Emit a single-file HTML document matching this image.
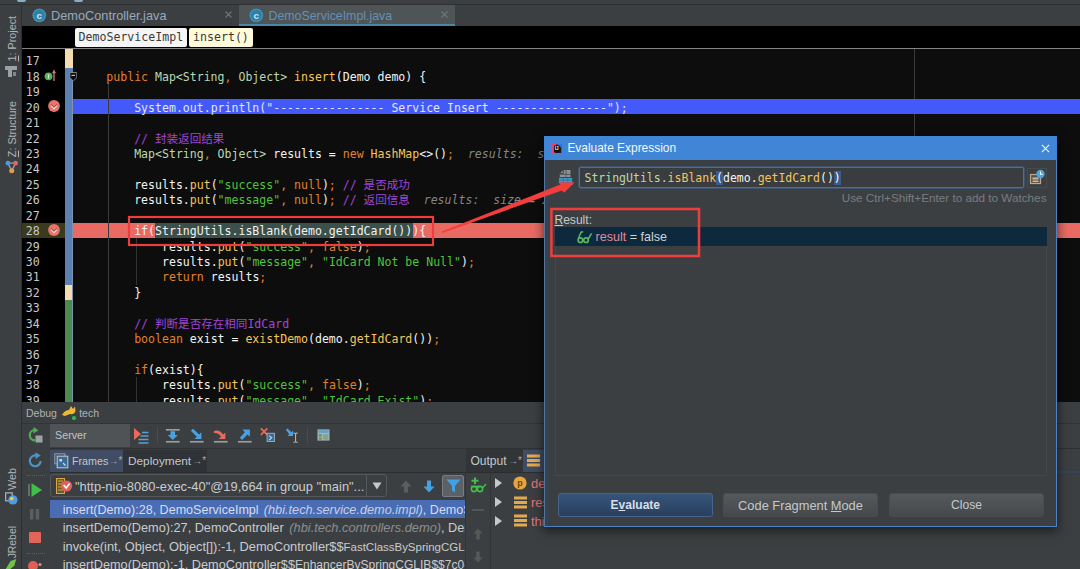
<!DOCTYPE html>
<html lang="zh">
<head>
<meta charset="utf-8">
<title>Evaluate Expression - Debug</title>
<style>
html,body{margin:0;padding:0;}
body{width:1080px;height:569px;overflow:hidden;background:#3c3f41;position:relative;
 font-family:"Liberation Sans","Noto Sans CJK SC",sans-serif;font-size:12.5px;color:#bbbbbb;}
.abs,body>div,body>svg{position:absolute;}
.abs{position:absolute}
/* ---------- top ---------- */
#topline{left:0;top:4px;width:1080px;height:1px;background:#2e3032;}
#leftstrip{left:0;top:5px;width:21px;height:564px;background:#3c3f41;border-right:1px solid #2d2f31;}
.vt{position:absolute;left:5px;width:15px;line-height:15px;writing-mode:vertical-rl;transform:rotate(180deg);white-space:nowrap;color:#b0b4b7;font-size:10.75px;}
/* tabs */
#tabs{left:22px;top:5px;width:1058px;height:21px;background:#3c3f41;}
.tab{position:absolute;top:0;height:21px;}
.tab .tx{position:absolute;top:3.2px;font-size:12.75px;line-height:16px;white-space:nowrap;}
.tab .x{position:absolute;top:5px;width:9px;height:9px;}
#tab2{left:217px;width:216px;background:#4f5456;border-bottom:2px solid #4a88a6;height:19px;}
/* breadcrumb */
#crumb{left:22px;top:26px;width:1058px;height:22px;background:#000;}
.cb{position:absolute;top:2px;height:19px;line-height:19.5px;border-radius:2px;font-family:"DejaVu Sans Mono","Liberation Mono",monospace;font-size:11.6px;color:#3a3a3a;padding:0 4px;white-space:pre;}
#sep{left:22px;top:48px;width:1058px;height:1px;background:#858585;}
/* editor */
#gutter{left:22px;top:49px;width:43px;height:353px;background:#000;}
#bar{left:65px;top:49px;width:8px;height:353px;background:#5b80b4;}
#editor{left:73px;top:49px;width:1007px;height:353px;background:#0d0d0d;}
.num{position:absolute;left:25.7px;width:24px;height:15.43px;line-height:15.43px;font-family:"DejaVu Sans Mono","Liberation Mono",monospace;font-size:11.6px;color:#c8c8c8;white-space:pre;}
.cl{position:absolute;height:15.43px;line-height:15.43px;font-family:"DejaVu Sans Mono","Liberation Mono","Noto Sans CJK SC",monospace;font-size:11.56px;color:#f2f2f2;white-space:pre;}
.k{color:#e0812c}.o{color:#e0812c}.t{color:#b9d8b2}.m{color:#f3c65c}.s{color:#4fc43c}.c{color:#a046d6}.d{color:#f2f2f2}
.h{color:#858585;font-style:italic}.d20{color:#e1e5ff}
.sel{color:#f2f2f2;}
.hl{position:absolute;left:73px;width:1007px;height:15.5px;}
.guide{position:absolute;width:1px;background:#3a3a3a;}
/* debug */
#dbghead{left:22px;top:402px;width:1058px;height:21px;background:#3c3f41;}
.ui{position:absolute;white-space:nowrap;line-height:16px;}
/* dialog */
#dlg{left:544px;top:136px;width:511px;height:389px;background:#3c3f41;border:1px solid #4f82c4;border-left-color:#5a7596;box-shadow:0 3px 10px 1px rgba(0,0,0,0.55);}
#dlgtitle{position:absolute;left:-1px;top:-1px;width:513px;height:24px;background:#4185d7;}
.btn{position:absolute;top:356px;height:22px;border-radius:3px;text-align:center;line-height:23.5px;font-size:12.84px;color:#c4c8cb;border:1px solid #4a4d4f;background:linear-gradient(#55595b,#45494b);}
.fr{position:absolute;left:12.7px;white-space:nowrap;font-size:12.55px;line-height:17px;color:#c9cccf}
.fr i{color:#8a8e91}
.inp{font-family:"DejaVu Sans Mono","Liberation Mono",monospace;font-size:11.5px;line-height:15px;white-space:pre}
</style>
</head>
<body>
<!-- top strip -->
<div id="topline"></div>
<div class="abs" style="left:17px;top:0;width:9px;height:1.5px;background:#86aec6;border-radius:0 0 4px 4px"></div>
<div class="abs" style="left:74px;top:0;width:9px;height:1.5px;background:#86aec6;border-radius:0 0 4px 4px"></div>

<!-- left tool strip -->
<div id="leftstrip">
</div>
<div class="vt" style="top:15.8px"><u>1</u>: Project</div>
<div class="vt" style="top:100.6px"><u>Z</u>: Structure</div>
<div class="vt" style="top:467.8px">Web</div>
<div class="vt" style="top:526.4px;font-size:10.4px">JRebel</div>
<!-- strip icons -->
<svg style="left:4px;top:65px" width="14" height="14" viewBox="0 0 14 14"><rect x="1" y="1" width="12" height="4" fill="#9aa0a5"/><rect x="4" y="5" width="4" height="7" fill="#9aa0a5"/><rect x="9" y="7" width="3" height="4" fill="#7f868b"/></svg>
<svg style="left:4.5px;top:159.5px" width="13.5" height="14" viewBox="0 0 14 14"><path d="M3 3 L7 11 L11 3z" stroke="#9aa0a5" stroke-width="1.4" fill="none"/><circle cx="3" cy="3" r="2.4" fill="#4f9ad6"/><circle cx="11" cy="3" r="2.4" fill="#e0686a"/><circle cx="7" cy="11" r="2.6" fill="#e39a4c"/></svg>
<svg style="left:3.5px;top:489.5px" width="15" height="16" viewBox="0 0 16 17"><rect x="1.8" y="3" width="7" height="8.5" fill="none" stroke="#aeb3b7" stroke-width="1.3"/><circle cx="9.5" cy="10.5" r="5" fill="#4d9be0"/><path d="M6 9 q2 -3 4 -1 q1 2 -1 3 q-2 1 -3 -2z" fill="#f0c850"/></svg>
<svg style="left:3px;top:558.5px" width="17" height="11.5" viewBox="0 0 18 12"><path d="M2 12 L8 2 L14 0 L12 7 L6 12z" fill="#6fc34a"/></svg>

<!-- tabs -->
<div id="tabs">
  <div class="tab" id="tab1" style="left:0;width:217px">
    <svg class="abs" style="left:10.4px;top:3.4px" width="14.6" height="14.6" viewBox="0 0 14 14"><circle cx="7" cy="7" r="6.6" fill="#3d8fb5"/><circle cx="7" cy="7" r="5" fill="#2f7ea5"/><text x="7" y="10.4" font-family="Liberation Sans, sans-serif" font-size="9.5" font-weight="bold" fill="#c9e6f2" text-anchor="middle">c</text></svg>
    <span class="tx" style="left:29px;color:#98a9ba">DemoController.java</span>
    <svg class="x" style="left:202px" viewBox="0 0 9 9"><path d="M1.5 1.5 L7.5 7.5 M7.5 1.5 L1.5 7.5" stroke="#6d7275" stroke-width="1.2"/></svg>
  </div>
  <div class="tab" id="tab2">
    <svg class="abs" style="left:10.4px;top:3.4px" width="14.6" height="14.6" viewBox="0 0 14 14"><circle cx="7" cy="7" r="6.6" fill="#3d8fb5"/><circle cx="7" cy="7" r="5" fill="#2f7ea5"/><text x="7" y="10.4" font-family="Liberation Sans, sans-serif" font-size="9.5" font-weight="bold" fill="#c9e6f2" text-anchor="middle">c</text></svg>
    <span class="tx" style="left:29.5px;color:#6591b5;font-size:12.36px">DemoServiceImpl.java</span>
    <svg class="x" style="left:201px" viewBox="0 0 9 9"><path d="M1.5 1.5 L7.5 7.5 M7.5 1.5 L1.5 7.5" stroke="#6f7477" stroke-width="1.2"/></svg>
  </div>
</div>

<!-- breadcrumb -->
<div id="crumb">
  <div class="cb" style="left:52.5px;background:#f5f5f5;">DemoServiceImpl</div>
  <div class="cb" style="left:167px;background:#fffbd8;">insert()</div>
</div>
<div id="sep"></div>

<!-- editor -->
<div id="gutter"></div>
<div id="bar"></div>
<div class="abs" style="left:65px;top:49px;width:8px;height:19px;background:#f3dcb0"></div>
<div class="abs" style="left:65px;top:284.5px;width:8px;height:15.5px;background:#f3dcb0"></div>
<div class="abs" style="left:65px;top:300px;width:8px;height:102px;background:#4b8a4f"></div>
<div id="editor"></div>
<div class="abs" style="left:914px;top:49px;width:1px;height:353px;background:#3a3a3a"></div>
<!-- line highlights -->
<div class="hl" style="top:98.75px;background:#4359fa"></div>
<div class="abs" style="left:22px;top:222.5px;width:43px;height:15.5px;background:#3a3a1c"></div>
<div class="hl" style="top:222.5px;background:#e96a63"></div>
<div class="abs" style="left:155px;top:222.5px;width:257.6px;height:15.5px;background:#3b504a"></div>
<!-- indent guides -->
<div class="guide" style="left:107.6px;top:83px;height:319px"></div>
<div class="guide" style="left:135.6px;top:238px;height:47px;background:#333"></div>
<div class="guide" style="left:135.6px;top:377px;height:25px;background:#333"></div>
<div class="num" style="top:54.36px">17</div>
<div class="num" style="top:69.79px">18</div>
<div class="cl" style="top:69.79px;left:106.34px"><span class="k">public </span><span class="t">Map&lt;String</span><span class="o">, </span><span class="t">Object&gt; </span><span class="m">insert</span><span class="d">(Demo demo) {</span></div>
<div class="num" style="top:85.22px">19</div>
<div class="num" style="top:100.65px">20</div>
<div class="cl" style="top:100.65px;left:134.18px"><span class="d20">System.out.println("---------------- Service Insert ----------------");</span></div>
<div class="num" style="top:116.08px">21</div>
<div class="num" style="top:131.51px">22</div>
<div class="cl" style="top:131.51px;left:134.18px"><span class="c">// 封装返回结果</span></div>
<div class="num" style="top:146.94px">23</div>
<div class="cl" style="top:146.94px;left:134.18px"><span class="t">Map&lt;String</span><span class="o">, </span><span class="t">Object&gt; </span><span class="d">results = </span><span class="k">new </span><span class="m">HashMap</span><span class="d">&lt;&gt;()</span><span class="o">;</span><span class="h">  results:  size = 2</span></div>
<div class="num" style="top:162.37px">24</div>
<div class="num" style="top:177.80px">25</div>
<div class="cl" style="top:177.80px;left:134.18px"><span class="d">results.</span><span class="m">put</span><span class="d">(</span><span class="s">"success"</span><span class="o">, </span><span class="k">null</span><span class="d">)</span><span class="o">; </span><span class="c">// 是否成功</span></div>
<div class="num" style="top:193.23px">26</div>
<div class="cl" style="top:193.23px;left:134.18px"><span class="d">results.</span><span class="m">put</span><span class="d">(</span><span class="s">"message"</span><span class="o">, </span><span class="k">null</span><span class="d">)</span><span class="o">; </span><span class="c">// 返回信息</span><span class="h">  results:  size = 2</span></div>
<div class="num" style="top:208.66px">27</div>
<div class="num" style="top:224.09px">28</div>
<div class="cl" style="top:224.09px;left:134.18px"><span class="d">if(</span><span class="sel">StringUtils.isBlank(demo.getIdCard())</span><span class="d">){</span></div>
<div class="num" style="top:239.52px">29</div>
<div class="cl" style="top:239.52px;left:162.02px"><span class="d">results.</span><span class="m">put</span><span class="d">(</span><span class="s">"success"</span><span class="o">, </span><span class="k">false</span><span class="d">)</span><span class="o">;</span></div>
<div class="num" style="top:254.95px">30</div>
<div class="cl" style="top:254.95px;left:162.02px"><span class="d">results.</span><span class="m">put</span><span class="d">(</span><span class="s">"message"</span><span class="o">, </span><span class="s">"IdCard Not be Null"</span><span class="d">)</span><span class="o">;</span></div>
<div class="num" style="top:270.38px">31</div>
<div class="cl" style="top:270.38px;left:162.02px"><span class="k">return </span><span class="d">results</span><span class="o">;</span></div>
<div class="num" style="top:285.81px">32</div>
<div class="cl" style="top:285.81px;left:134.18px"><span class="d">}</span></div>
<div class="num" style="top:301.24px">33</div>
<div class="num" style="top:316.67px">34</div>
<div class="cl" style="top:316.67px;left:134.18px"><span class="c">// 判断是否存在相同IdCard</span></div>
<div class="num" style="top:332.10px">35</div>
<div class="cl" style="top:332.10px;left:134.18px"><span class="k">boolean </span><span class="d">exist = </span><span class="m">existDemo</span><span class="d">(demo.</span><span class="m">getIdCard</span><span class="d">())</span><span class="o">;</span></div>
<div class="num" style="top:347.53px">36</div>
<div class="num" style="top:362.96px">37</div>
<div class="cl" style="top:362.96px;left:134.18px"><span class="k">if</span><span class="d">(exist){</span></div>
<div class="num" style="top:378.39px">38</div>
<div class="cl" style="top:378.39px;left:162.02px"><span class="d">results.</span><span class="m">put</span><span class="d">(</span><span class="s">"success"</span><span class="o">, </span><span class="k">false</span><span class="d">)</span><span class="o">;</span></div>
<div class="num" style="top:393.82px">39</div>
<div class="cl" style="top:393.82px;left:162.02px"><span class="d">results.</span><span class="m">put</span><span class="d">(</span><span class="s">"message"</span><span class="o">, </span><span class="s">"IdCard Exist"</span><span class="d">)</span><span class="o">;</span></div>

<!-- gutter icons -->
<!-- line 18 override icon -->
<svg style="left:44px;top:68px" width="14" height="14" viewBox="44 68 14 14"><circle cx="48.5" cy="76.3" r="3.9" fill="#55b25c"/><path d="M48.5 74.3 V78.4" stroke="#cfeccf" stroke-width="1.3"/><path d="M54 81 V72" stroke="#d47f7f" stroke-width="1.3"/><path d="M52 73.2 L54 69.6 L56 73.2z" fill="#d47f7f"/></svg>
<!-- fold marker line 18 -->
<div class="abs" style="left:72px;top:80px;width:1px;height:322px;background:#8292aa"></div>
<svg style="left:68.7px;top:71.7px" width="8.6" height="9.4" viewBox="0 0 11 13"><path d="M0.7 0.7 H10.3 V8 L5.5 12.3 L0.7 8z" fill="#0d0d0d" stroke="#9a9a9a" stroke-width="1.1"/><path d="M3 4.6 H8" stroke="#e8e8e8" stroke-width="1.3"/></svg>
<!-- breakpoints -->
<svg style="left:48px;top:100.2px" width="12" height="12" viewBox="0 0 12 12"><circle cx="6" cy="6" r="5.9" fill="#e8746c"/><path d="M3 4.6 L6 7.6 L9 4.6" stroke="#8a3532" stroke-width="1.1" fill="none"/><path d="M3 5.6 L6 8.6 L9 5.6" stroke="#fbe4e2" stroke-width="1.1" fill="none"/></svg>
<svg style="left:48px;top:224px" width="12" height="12" viewBox="0 0 12 12"><circle cx="6" cy="6" r="5.9" fill="#e8746c"/><path d="M3 4.6 L6 7.6 L9 4.6" stroke="#8a3532" stroke-width="1.1" fill="none"/><path d="M3 5.6 L6 8.6 L9 5.6" stroke="#fbe4e2" stroke-width="1.1" fill="none"/></svg>

<!-- red annotation rectangle + arrow -->


<!-- debug header -->
<div id="dbghead">
  <span class="ui" style="left:4px;top:3px;font-size:10.5px;color:#aeb2b5">Debug</span>
  <svg class="abs" style="left:39px;top:2px" width="17" height="16" viewBox="0 0 17 16"><path d="M1 11 Q4 6 8 6 L10 2 L12 5 L14 2.5 L14.5 7 Q13 11 9 10 L4 12z" fill="#e8b93a"/><circle cx="13" cy="14" r="2.1" fill="#2fb84a"/></svg>
  <span class="ui" style="left:57.2px;top:3px;font-size:10.55px;color:#aeb2b5">tech</span>
</div>

<!-- debug left icon column -->
<div class="abs" style="left:22px;top:423px;width:27px;height:146px;background:#3c3f41"></div>
<div class="abs" style="left:22px;top:423px;width:1058px;height:1px;background:#323436"></div>
<!-- rerun icon -->
<svg style="left:27px;top:427px" width="17" height="17" viewBox="0 0 17 17"><path d="M8 3 A5.2 5.2 0 1 0 8 13.4" stroke="#4fae55" stroke-width="2.2" fill="none"/><path d="M6.5 0 L11.5 3.2 L6.5 6.4z" fill="#4fae55"/><rect x="8.5" y="8.5" width="7" height="7" fill="#9da2a6"/></svg>
<!-- refresh icon -->
<svg style="left:27px;top:452px" width="17" height="17" viewBox="0 0 17 17"><path d="M13.6 9 A5.4 5.4 0 1 1 9.5 3.6" stroke="#4a94c8" stroke-width="2.2" fill="none"/><path d="M8.5 0.2 L13.8 3.6 L8.5 7z" fill="#4a94c8"/></svg>
<!-- resume -->
<svg style="left:27px;top:482px" width="17" height="16" viewBox="0 0 17 16"><rect x="1" y="2" width="2" height="12" fill="#55775a"/><path d="M4.5 1 L15 8 L4.5 15z" fill="#3fbf4a"/></svg>
<!-- pause -->
<svg style="left:29px;top:508px" width="11.5" height="12.5" viewBox="0 0 12 13"><rect x="1" y="1" width="3.6" height="11" fill="#5b5f62"/><rect x="7" y="1" width="3.6" height="11" fill="#5b5f62"/></svg>
<!-- stop -->
<div class="abs" style="left:28.5px;top:532.2px;width:12.3px;height:11.3px;background:#e2655a;border-radius:1px"></div>
<!-- view breakpoints -->
<div class="abs" style="left:27px;top:475px;width:18px;height:0;border-top:1px dotted #5a5e60"></div>
<div class="abs" style="left:27px;top:553px;width:18px;height:0;border-top:1px dotted #5a5e60"></div>
<svg style="left:26.5px;top:557px" width="16" height="16" viewBox="0 0 16 16"><circle cx="6" cy="9" r="5" fill="#e15f55"/><circle cx="13" cy="7.5" r="1.6" fill="#e38a84"/></svg>

<!-- toolbar row -->
<div class="abs" style="left:50px;top:424px;width:80px;height:23px;background:#4f5355;"></div>
<span class="ui" style="left:55px;top:427px;font-size:10.76px;color:#c0c4c7">Server</span>
<div class="abs" style="left:157px;top:427px;width:1px;height:17px;background:#4a4d4f"></div>
<div class="abs" style="left:307px;top:427px;width:1px;height:17px;background:#4a4d4f"></div>
<!-- show execution point -->
<svg style="left:133px;top:427px" width="18" height="17" viewBox="0 0 18 17"><path d="M1 1 L8 7 L1 13z" fill="#ea6a5a"/><path d="M9 5.5 H15.5 M7.5 9 H15.5 M5.5 12.5 H15.5 M5.5 16 H15.5" stroke="#58a0d0" stroke-width="1.5"/></svg>
<!-- step over -->
<svg style="left:164.6px;top:427.6px" width="15.6" height="15.6" viewBox="0 0 17 17"><path d="M1 2 H16" stroke="#9a9fa3" stroke-width="1.8"/><path d="M1 15 H16" stroke="#9a9fa3" stroke-width="1.8"/><path d="M6 3.5 H11 V7.5 H14 L8.5 13 L3 7.5 H6z" fill="#45a3e3"/></svg>
<!-- step into -->
<svg style="left:188.6px;top:427.6px" width="15.6" height="15.6" viewBox="0 0 17 17"><path d="M1 15 H16" stroke="#9a9fa3" stroke-width="1.8"/><path d="M2 3 L4.5 0.8 L11 7 L13.5 4.5 V12 H6 L8.5 9.5z" fill="#45a3e3"/></svg>
<!-- force step into -->
<svg style="left:212.6px;top:427.6px" width="15.6" height="15.6" viewBox="0 0 17 17"><path d="M1 15 H16" stroke="#9a9fa3" stroke-width="1.8"/><path d="M1 3.2 Q7 1 11 7.2 L13.5 4.8 V12 H6.2 L8.7 9.5 Q6 5 1 5.5z" fill="#ea6a5a"/></svg>
<!-- step out -->
<svg style="left:236.6px;top:427.6px" width="15.6" height="15.6" viewBox="0 0 17 17"><path d="M1 15 H16" stroke="#9a9fa3" stroke-width="1.8"/><path d="M3 10.5 L5.5 13 L11.5 7 L14 9.5 V1.5 H6 L8.5 4.5z" fill="#45a3e3"/></svg>
<!-- drop frame -->
<svg style="left:259.8px;top:426.6px" width="15.6" height="15.6" viewBox="0 0 18 18"><path d="M1 1.5 L8.5 9 M8.5 1.5 L1 9" stroke="#ea6a5a" stroke-width="2"/><rect x="8.2" y="7.2" width="8.6" height="9.6" fill="#3a6c96" stroke="#9fb6c8" stroke-width="1"/><path d="M10.5 10 L13.5 12.5 L10.5 15" stroke="#bfe0f5" stroke-width="1.2" fill="none"/></svg>
<!-- run to cursor -->
<svg style="left:285px;top:428px" width="15.2" height="15.2" viewBox="0 0 18 18"><path d="M1 2 L3 0.5 L7.5 5 L9.5 3 V9.5 H3 L5 7.5z" fill="#45a3e3"/><path d="M10 6 Q12 6 12.5 7 Q13 6 15 6 M12.5 7 V16 M10 17 Q12 17 12.5 16 Q13 17 15 17" stroke="#aeb3b7" stroke-width="1.3" fill="none"/></svg>
<!-- evaluate expression icon -->
<svg style="left:316.5px;top:429.4px" width="13" height="12" viewBox="0 0 15 14"><rect x="0.5" y="0.5" width="14" height="13" fill="#a8b4ba" /><rect x="1.5" y="1.5" width="12" height="3" fill="#5a9fd0"/><rect x="2" y="6" width="3.5" height="3" fill="#6f8f5a"/><rect x="2" y="10" width="3.5" height="2.5" fill="#6f8f5a"/><rect x="7" y="6" width="6" height="6.5" fill="#7fa58a"/></svg>

<!-- row 2 tabs -->
<div class="abs" style="left:50px;top:448px;width:1030px;height:1px;background:#2f3133"></div>
<div class="abs" style="left:50px;top:449px;width:416px;height:23px;background:#3a3d3f"></div>
<div class="abs" style="left:50px;top:449.5px;width:72.5px;height:23px;background:#3f4c63"></div>
<div class="abs" style="left:123px;top:449.5px;width:83.5px;height:23px;background:#2f3337"></div>
<svg style="left:54px;top:453px" width="15" height="16" viewBox="0 0 15 16"><rect x="0.8" y="0.8" width="10" height="10" fill="none" stroke="#8f989e" stroke-width="1.1"/><rect x="3.2" y="3.2" width="10.6" height="11.6" fill="#3a6c96" stroke="#b8c4cc" stroke-width="1.1"/><rect x="5.5" y="6" width="2.5" height="2.5" fill="#bfe0f5"/><path d="M9 10 L11.5 12.5" stroke="#bfe0f5" stroke-width="1.3"/></svg>
<span class="ui" style="left:72px;top:453px;font-size:10.71px;color:#c3c7ca">Frames</span>
<span class="ui" style="left:108.6px;top:452.5px;font-size:10px;color:#a8acaf">→*</span>
<span class="ui" style="left:128px;top:453px;font-size:11.84px;color:#c3c7ca">Deployment</span>
<span class="ui" style="left:192.2px;top:452.5px;font-size:10px;color:#a8acaf">→*</span>
<div class="abs" style="left:466px;top:449px;width:57px;height:23px;background:#313538"></div>
<span class="ui" style="left:470.4px;top:453px;font-size:12.09px;color:#c3c7ca">Output</span>
<span class="ui" style="left:508px;top:452.5px;font-size:10px;color:#a8acaf">→*</span>
<div class="abs" style="left:523px;top:449.5px;width:22px;height:23px;background:#3f4c63"></div>
<svg style="left:527px;top:454px" width="13" height="13" viewBox="0 0 13 13"><rect x="0" y="0.5" width="13" height="3" fill="#e3aa4c"/><rect x="0" y="5" width="13" height="3" fill="#e3aa4c"/><rect x="0" y="9.5" width="13" height="3" fill="#e3aa4c"/></svg>
<div class="abs" style="left:50px;top:472px;width:1030px;height:1px;background:#2b2d2f"></div>
<div class="abs" style="left:1057px;top:471px;width:23px;height:2px;background:#33465e"></div>

<!-- thread dropdown -->
<div class="abs" style="left:50px;top:474px;width:337px;height:23px;background:#3c3f41;border:1px solid #55595b;border-radius:3px;box-sizing:border-box"></div>
<div class="abs" style="left:366px;top:475px;width:1px;height:21px;background:#55595b"></div>
<svg style="left:56px;top:478px" width="17" height="16" viewBox="0 0 17 16"><rect x="0.5" y="0.5" width="8" height="15" fill="#6b5a2e" stroke="#d9a441" stroke-width="1"/><path d="M2 3 H7 M2 6 H7 M2 9 H7 M2 12 H7" stroke="#d9a441" stroke-width="1"/><circle cx="10.5" cy="8" r="5.6" fill="#e0605f"/><path d="M7.6 7 L10.2 10 L13.6 5.6" stroke="#fff" stroke-width="1.6" fill="none"/></svg>
<span class="ui" style="left:75px;top:477.5px;font-size:12.9px;color:#c9cccf;line-height:17px">"http-nio-8080-exec-40"@19,664 in group "main"...</span>
<svg style="left:372px;top:482px" width="10" height="8" viewBox="0 0 10 8"><path d="M0.5 0.5 H9.5 L5 7.5z" fill="#c5c8ca"/></svg>
<!-- up / down / filter -->
<svg style="left:400px;top:480px" width="12" height="13" viewBox="0 0 12 13"><path d="M6 0.5 L11.5 6.5 H8 V12.5 H4 V6.5 H0.5z" fill="#5a5e61"/></svg>
<svg style="left:423px;top:480px" width="12" height="13" viewBox="0 0 12 13"><path d="M6 12.5 L11.5 6.5 H8 V0.5 H4 V6.5 H0.5z" fill="#45a3e3"/></svg>
<div class="abs" style="left:442px;top:475px;width:22px;height:22px;background:#5b6167;border:1px solid #787d81;border-radius:2px;box-sizing:border-box"></div>
<svg style="left:446px;top:479px" width="15" height="14" viewBox="0 0 15 14"><path d="M0.5 0.5 H14.5 L9 7 V13.5 L6 11.5 V7z" fill="#3ea2e6"/></svg>

<!-- frames list -->
<div class="abs" style="left:50px;top:499px;width:415px;height:70px;background:#3c3f41"></div>
<div class="abs" style="left:50px;top:499.5px;width:415px;height:18.3px;background:#4a6cb3"></div>
<div class="abs" style="left:50px;top:499px;width:415px;height:70px;overflow:hidden">
<span class="fr" style="top:1.5px;color:#d5def0">insert(Demo):28, DemoServiceImpl<i style="color:#c3cfe8;font-size:12.73px;margin-left:5.2px">(hbi.tech.service.demo.impl)</i>, DemoServiceImpl</span>
<span class="fr" style="top:20px;font-size:12.71px">insertDemo(Demo):27, DemoController<i style="font-size:12.82px;margin-left:5.7px">(hbi.tech.controllers.demo)</i>, DemoController</span>
<span class="fr" style="top:38.5px;font-size:12.84px">invoke(int, Object, Object[]):-1, DemoController$$<span style="font-size:11.46px">FastClassBySpringCGLIB$$e1b6a1c</span></span>
<span class="fr" style="top:57px;font-size:12.71px">insertDemo(Demo):-1, DemoController$$<span style="font-size:12.04px">EnhancerBySpringCGLIB$$7c0-</span></span>
</div>

<!-- variables side column -->
<div class="abs" style="left:465px;top:473px;width:25.5px;height:96px;background:#3c3f41;border-left:1px solid #323436;border-right:1px solid #323436;box-sizing:border-box"></div>
<svg style="left:470px;top:477px" width="17" height="17" viewBox="0 0 17 17"><path d="M5 0.5 V7 M1.5 3.7 H8.5" stroke="#3fbf4a" stroke-width="2"/><circle cx="4" cy="12" r="2.6" fill="none" stroke="#3fbf4a" stroke-width="1.6"/><circle cx="10" cy="12" r="2.6" fill="none" stroke="#3fbf4a" stroke-width="1.6"/><path d="M1 9.5 H10 M12.5 11 L16 7" stroke="#3fbf4a" stroke-width="1.4"/></svg>
<div class="abs" style="left:472px;top:509px;width:12px;height:1.5px;background:#53575a"></div>
<svg style="left:473px;top:528px" width="10" height="12" viewBox="0 0 10 12"><path d="M5 0.5 L9.5 5.5 H6.8 V11.5 H3.2 V5.5 H0.5z" fill="#55595c"/></svg>
<svg style="left:473px;top:551px" width="10" height="12" viewBox="0 0 10 12"><path d="M5 11.5 L9.5 6.5 H6.8 V0.5 H3.2 V6.5 H0.5z" fill="#55595c"/></svg>
<!-- variables -->
<svg style="left:494px;top:477px" width="9" height="12" viewBox="0 0 9 12"><path d="M1 1 L8 6 L1 11z" fill="#c5c8ca"/></svg>
<svg style="left:494px;top:496px" width="9" height="12" viewBox="0 0 9 12"><path d="M1 1 L8 6 L1 11z" fill="#c5c8ca"/></svg>
<svg style="left:494px;top:514.5px" width="9" height="12" viewBox="0 0 9 12"><path d="M1 1 L8 6 L1 11z" fill="#c5c8ca"/></svg>
<svg style="left:513px;top:476px" width="14" height="14" viewBox="0 0 14 14"><circle cx="7" cy="7" r="6.6" fill="#e8a53c"/><text x="7" y="10" font-family="Liberation Sans, sans-serif" font-size="9" font-weight="bold" fill="#6a4a14" text-anchor="middle">p</text></svg>
<svg style="left:514px;top:495.5px" width="13" height="13" viewBox="0 0 13 13"><rect x="0" y="0.5" width="13" height="3" fill="#e3aa4c"/><rect x="0" y="5" width="13" height="3" fill="#e3aa4c"/><rect x="0" y="9.5" width="13" height="3" fill="#e3aa4c"/></svg>
<svg style="left:514px;top:514px" width="13" height="13" viewBox="0 0 13 13"><rect x="0" y="0.5" width="13" height="3" fill="#e3aa4c"/><rect x="0" y="5" width="13" height="3" fill="#e3aa4c"/><rect x="0" y="9.5" width="13" height="3" fill="#e3aa4c"/></svg>
<span class="ui" style="left:531px;top:475px;font-size:13px;color:#e5737b;line-height:17px">demo</span>
<span class="ui" style="left:531px;top:494px;font-size:13px;color:#e5737b;line-height:17px">results</span>
<span class="ui" style="left:531px;top:512.5px;font-size:13px;color:#e5737b;line-height:17px">this</span>


<div id="dlg">
  <div id="dlgtitle">
    <svg class="abs" style="left:8.3px;top:8px" width="9.3" height="9.3" viewBox="0 0 12 12"><rect x="0" y="0" width="12" height="12" rx="1" fill="#1a1a1a"/><path d="M0 0 H6 L3 12 H0z" fill="#e8436a"/><path d="M6 0 H12 V5z" fill="#2a7de8"/><rect x="2.5" y="2" width="7" height="8" fill="#0a0a0a"/><text x="6" y="8" font-family="Liberation Sans, sans-serif" font-size="6" font-weight="bold" fill="#fff" text-anchor="middle">IJ</text></svg>
    <span class="ui" style="left:23.4px;top:4.3px;font-size:11.93px;color:#f2f6fb">Evaluate Expression</span>
    <svg class="abs" style="left:496.5px;top:8px" width="9" height="9" viewBox="0 0 10 10"><path d="M1 1 L9 9 M9 1 L1 9" stroke="#eef4fb" stroke-width="1.3"/></svg>
  </div>
  <div class="abs" style="left:0;top:23px;width:4px;height:366px;background:linear-gradient(90deg,#2e4058,#33445a 50%,#3c3f41)"></div>
  <!-- stack icon -->
  <svg class="abs" style="left:12.8px;top:32px" width="16" height="16" viewBox="0 0 18 18"><path d="M6 1 H14 V9 H2 V5z" fill="#8e9397"/><path d="M6 1 V5 H2" stroke="#3c3f41" stroke-width="1" fill="none"/><path d="M9 1 V9 M2 6 H14" stroke="#3c3f41" stroke-width="0.8"/><rect x="1" y="10" width="15" height="6" fill="#3d9ac8"/><path d="M1 12.5 H16 M6 10 V16 M11 10 V16" stroke="#2b6f96" stroke-width="0.8"/><path d="M13 16.5 H17 L15 18.5z" fill="#d8dadc"/></svg>
  <!-- input -->
  <div class="abs" style="left:34px;top:30px;width:445px;height:21px;box-sizing:border-box;border:1px solid #4f6f98;border-radius:2px;background:#3a3d3f;box-shadow:0 0 0 1px #3d5470"></div>
  <div class="abs inp" style="left:39.5px;top:33.5px;"><span style="color:#b9d9a8">StringUtils</span><span style="color:#c9c9c9">.</span><span style="color:#f3c65c">isBlank</span><span style="color:#fff;background:#3b5b8c">(</span><span style="color:#f2f2f2">demo.</span><span style="color:#f3c65c">getIdCard</span><span style="color:#f2f2f2">()</span><span style="color:#fff;background:#3b5b8c">)</span></div>
  <!-- watch icon -->
  <div class="abs" style="left:482px;top:31px;width:20px;height:20px;box-sizing:border-box;border:1px solid #4a4a48;"></div>
  <svg class="abs" style="left:484px;top:32px" width="17" height="17" viewBox="0 0 17 17"><rect x="1.5" y="5.5" width="10" height="9" fill="#5a5348" stroke="#b9a98e" stroke-width="1.2"/><rect x="3.5" y="8.5" width="6" height="2" fill="#c9b99e"/><rect x="3.5" y="11.5" width="6" height="1.5" fill="#c9b99e"/><circle cx="11.5" cy="5" r="4.2" fill="#4da3e0"/><path d="M11.5 2.5 V5.2 H13.6" stroke="#fff" stroke-width="1.1" fill="none"/></svg>
  <span class="ui" style="right:9.5px;top:53.2px;font-size:11.72px;color:#787d81;">Use Ctrl+Shift+Enter to add to Watches</span>
  <!-- result -->
  <span class="ui" style="left:9.4px;top:74.6px;font-size:12.1px;color:#c5c8cb"><u>R</u>esult:</span>
  <div class="abs" style="left:9.5px;top:89.7px;width:492.5px;height:249px;box-sizing:border-box;border:1px solid #45484a;border-top:none;background:#3c3f41"></div>
  <div class="abs" style="left:9.5px;top:90.3px;width:492px;height:19.1px;background:#0d293e"></div>
  <svg class="abs" style="left:32.3px;top:92.6px" width="16" height="15" viewBox="0 0 16 15"><circle cx="3.4" cy="10.2" r="2.3" fill="none" stroke="#58b862" stroke-width="1.7"/><circle cx="9" cy="10.2" r="2.3" fill="none" stroke="#58b862" stroke-width="1.7"/><path d="M1.2 9 L4 2.2 L6.2 1.8 M5.7 9.5 H6.7 M11.2 9 L14.6 3.4" stroke="#58b862" stroke-width="1.5" fill="none"/></svg>
  <span class="ui" style="left:50.5px;top:92.2px;font-size:12.57px;line-height:17px"><span style="color:#e2889a">result</span><span style="color:#d2d4d6"> = false</span></span>
  <!-- buttons -->
  <div class="btn" style="left:12.8px;width:153px;color:#d8dee6;font-weight:bold;font-size:12.03px;border-color:#46648c;background:linear-gradient(#35557a,#293f5e)">E<u>v</u>aluate</div>
  <div class="btn" style="left:178px;width:153px;">Code Fragment <u>M</u>ode</div>
  <div class="btn" style="left:344px;width:153px;font-size:12.1px">Close</div>
</div>

<!-- annotations -->
<svg style="left:0;top:0" width="1080" height="569" viewBox="0 0 1080 569"><rect x="129" y="217" width="304" height="28" fill="none" stroke="#ee3d3d" stroke-width="2.2"/><rect x="551.4" y="209" width="147.6" height="47" fill="none" stroke="#ee3d3d" stroke-width="2.5"/><path d="M441.8 231.6 L560.4 184.4 L559.6 182.2 L574.5 182.6 L564.2 192.8 L561.8 190.4 L442.4 233z" fill="#f23e3c"/></svg>
</body>
</html>
